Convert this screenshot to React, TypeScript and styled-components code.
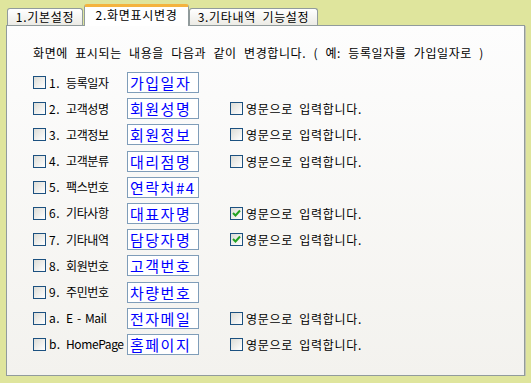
import styled, { createGlobalStyle } from 'styled-components'

const GlobalStyle = createGlobalStyle`
  html, body {
    margin: 0;
    padding: 0;
    background: #dfe59d;
  }
  body {
    font-family: 'Noto Sans CJK KR', 'Liberation Sans', sans-serif;
    font-size: 12px;
    letter-spacing: 0.7px;
    word-spacing: 3px;
    color: #000;
  }
`

type Field = {
  no: string
  label: string
  value: string
  english?: boolean
  checked?: boolean
}

const fields: Field[] = [
  { no: '1.', label: '등록일자', value: '가입일자' },
  { no: '2.', label: '고객성명', value: '회원성명', english: true },
  { no: '3.', label: '고객정보', value: '회원정보', english: true },
  { no: '4.', label: '고객분류', value: '대리점명', english: true },
  { no: '5.', label: '팩스번호', value: '연락처#4' },
  { no: '6.', label: '기타사항', value: '대표자명', english: true, checked: true },
  { no: '7.', label: '기타내역', value: '담당자명', english: true, checked: true },
  { no: '8.', label: '회원번호', value: '고객번호' },
  { no: '9.', label: '주민번호', value: '차량번호' },
  { no: 'a.', label: 'E - Mail', value: '전자메일', english: true },
  { no: 'b.', label: 'HomePage', value: '홈페이지', english: true },
]

function CheckBox({ checked }: { checked?: boolean }) {
  return (
    <Box>
      {checked && (
        <svg width="9" height="9" viewBox="0 0 9 9">
          <path d="M1 4 L3.5 6.5 L8 1.5" stroke="#21a121" strokeWidth="2" fill="none" />
        </svg>
      )}
    </Box>
  )
}

export default function App() {
  return (
    <>
      <GlobalStyle />
      <Window>
        <TabStrip>
          <Tab>1.기본설정</Tab>
          <ActiveTab>2.화면표시변경</ActiveTab>
          <Tab $wide>3.기타내역 기능설정</Tab>
        </TabStrip>
        <Panel>
          <Heading>화면에 표시되는 내용을 다음과 같이 변경합니다. ( 예: 등록일자를 가입일자로 )</Heading>
          <FieldGrid>
            {fields.map((f) => (
              <FieldRow key={f.no}>
                <Check>
                  <CheckBox />
                  <Label>
                    <No>{f.no}</No>
                    {f.label}
                  </Label>
                </Check>
                <ValueBox>{f.value}</ValueBox>
                {f.english && (
                  <Check>
                    <CheckBox checked={f.checked} />
                    <span>영문으로 입력합니다.</span>
                  </Check>
                )}
              </FieldRow>
            ))}
          </FieldGrid>
        </Panel>
      </Window>
    </>
  )
}

const Window = styled.div`
  padding: 4px 0 0 6px;
  width: 520px;
`

const TabStrip = styled.div`
  display: flex;
  align-items: flex-end;
  height: 21px;
  padding-left: 1px;
  position: relative;
  z-index: 2;
`

const Tab = styled.div<{ $wide?: boolean }>`
  box-sizing: border-box;
  width: ${(p) => (p.$wide ? '129px' : '76px')};
  height: 17px;
  border: 1px solid #919b9c;
  border-bottom: none;
  border-radius: 3px 3px 0 0;
  background: linear-gradient(#ffffff, #ecebe5);
  display: flex;
  align-items: center;
  justify-content: center;
  line-height: 14px;
  white-space: nowrap;
`

const ActiveTab = styled.div`
  box-sizing: border-box;
  width: 105px;
  height: 22px;
  margin: 0 0 -1px 1px;
  border: 1px solid #919b9c;
  border-top: 3px solid #f4b33e;
  border-bottom: none;
  border-radius: 3px 3px 0 0;
  background: #fff;
  display: flex;
  align-items: flex-start;
  justify-content: center;
  padding-top: 1px;
  line-height: 14px;
  white-space: nowrap;
`

const Panel = styled.div`
  box-sizing: border-box;
  width: 519px;
  height: 351px;
  border: 1px solid #919b9c;
  background: linear-gradient(#fdfdfd, #f3f2ee);
  box-shadow: 1px 1px 0 #c3c4b0;
  padding: 19px 0 0 26px;
  position: relative;
  z-index: 1;
`

const Heading = styled.div`
  height: 16px;
  line-height: 16px;
  letter-spacing: 0.6px;
  word-spacing: 4px;
  margin-bottom: 11px;
  white-space: nowrap;
`

const FieldGrid = styled.div`
  display: flex;
  flex-direction: column;
  gap: 5.2px;
`

const FieldRow = styled.div`
  display: grid;
  grid-template-columns: 94px 103px auto;
  align-items: center;
  height: 21px;
`

const Check = styled.div`
  display: flex;
  align-items: center;
  gap: 3px;
  white-space: nowrap;
`

const Box = styled.span`
  box-sizing: border-box;
  width: 13px;
  height: 13px;
  border: 1px solid #1c5180;
  background: linear-gradient(135deg, #dcdcd6, #ffffff);
  display: inline-flex;
  align-items: center;
  justify-content: center;
  flex: none;
`

const Label = styled.span`
  line-height: 14px;
  letter-spacing: -0.4px;
  word-spacing: 2px;
`

const No = styled.span`
  display: inline-block;
  width: 17px;
  letter-spacing: 0.5px;
`

const ValueBox = styled.div`
  box-sizing: border-box;
  width: 72px;
  height: 21px;
  border: 1px solid #7f9db9;
  background: #fff;
  color: #0000ff;
  font-size: 15px;
  line-height: 19px;
  letter-spacing: 1.5px;
  padding-left: 2px;
  white-space: nowrap;
  overflow: hidden;
`
